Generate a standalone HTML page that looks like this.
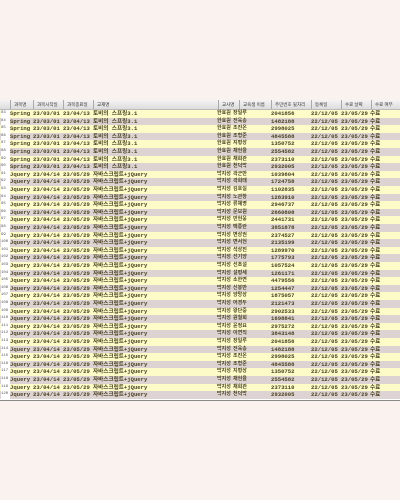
<!DOCTYPE html>
<html><head><meta charset="utf-8"><style>
body{margin:0;width:400px;height:500px;background:#faf2ee;position:relative;overflow:hidden;font-family:"Liberation Mono","Noto Sans CJK KR",monospace;}
#t{position:absolute;left:0;top:100px;width:400px;height:300px;background:#fff;border-bottom:1px solid #888;}
#h{position:absolute;left:0;top:0;width:400px;height:9px;background:linear-gradient(#f4f4f4,#dcdcdc);border-bottom:1px solid #bbb;}
#h span{position:absolute;top:0;height:9px;border-left:1px solid #aaa;font:4.5px "Liberation Sans","Noto Sans CJK KR",sans-serif;line-height:9px;color:#333;padding-left:3px;box-sizing:border-box}
.r{position:absolute;left:0;width:400px;height:7.6px;font-size:5.6px;line-height:7.6px;color:#4a4020;font-weight:bold;}
.y{background:#fdfcc8}.g{background:#ddd3d3}
.r span{position:absolute;white-space:nowrap}
.r .n{left:1px;font-size:4px;font-weight:normal;color:#555;background:#fff;width:9px;height:7.6px}
.a{left:10px}.b{left:33px}.c{left:63px}.d{left:93px}.e{left:217px;font-size:5px}.f{left:233px;font-size:5px}.h{left:271px}.i{left:311px}.j{left:341px}.k{left:370px}
</style></head><body><div id="t">
<div id="h"><span style="left:10px;width:23px">과목명</span><span style="left:33px;width:30px">과목시작일</span><span style="left:63px;width:30px">과목종료일</span><span style="left:93px;width:125px">교재명</span><span style="left:218px;width:21px">교사명</span><span style="left:239px;width:32px">교육생 이름</span><span style="left:271px;width:40px">주민번호 뒷자리</span><span style="left:311px;width:30px">등록일</span><span style="left:341px;width:30px">수료 날짜</span><span style="left:371px;width:29px">수료 여부</span></div>
<div class="r y" style="top:10px"><span class="n">83</span><span class="a">Spring</span><span class="b">23/03/01</span><span class="c">23/04/13</span><span class="d">토비의 스프링3.1</span><span class="e">한효원</span><span class="f">장일루</span><span class="h">2041856</span><span class="i">22/12/05</span><span class="j">23/05/29</span><span class="k">수료</span></div>
<div class="r g" style="top:17.6px"><span class="n">84</span><span class="a">Spring</span><span class="b">23/03/01</span><span class="c">23/04/13</span><span class="d">토비의 스프링3.1</span><span class="e">한효원</span><span class="f">전육송</span><span class="h">1482188</span><span class="i">22/12/05</span><span class="j">23/05/29</span><span class="k">수료</span></div>
<div class="r y" style="top:25.2px"><span class="n">85</span><span class="a">Spring</span><span class="b">23/03/01</span><span class="c">23/04/13</span><span class="d">토비의 스프링3.1</span><span class="e">한효원</span><span class="f">조진온</span><span class="h">2998025</span><span class="i">22/12/05</span><span class="j">23/05/29</span><span class="k">수료</span></div>
<div class="r g" style="top:32.8px"><span class="n">86</span><span class="a">Spring</span><span class="b">23/03/01</span><span class="c">23/04/13</span><span class="d">토비의 스프링3.1</span><span class="e">한효원</span><span class="f">조형준</span><span class="h">4845588</span><span class="i">22/12/05</span><span class="j">23/05/29</span><span class="k">수료</span></div>
<div class="r y" style="top:40.4px"><span class="n">87</span><span class="a">Spring</span><span class="b">23/03/01</span><span class="c">23/04/13</span><span class="d">토비의 스프링3.1</span><span class="e">한효원</span><span class="f">지평상</span><span class="h">1350752</span><span class="i">22/12/05</span><span class="j">23/05/29</span><span class="k">수료</span></div>
<div class="r g" style="top:48px"><span class="n">88</span><span class="a">Spring</span><span class="b">23/03/01</span><span class="c">23/04/13</span><span class="d">토비의 스프링3.1</span><span class="e">한효원</span><span class="f">채현율</span><span class="h">2554582</span><span class="i">22/12/05</span><span class="j">23/05/29</span><span class="k">수료</span></div>
<div class="r y" style="top:55.6px"><span class="n">89</span><span class="a">Spring</span><span class="b">23/03/01</span><span class="c">23/04/13</span><span class="d">토비의 스프링3.1</span><span class="e">한효원</span><span class="f">채희관</span><span class="h">2373110</span><span class="i">22/12/05</span><span class="j">23/05/29</span><span class="k">수료</span></div>
<div class="r g" style="top:63.2px"><span class="n">90</span><span class="a">Spring</span><span class="b">23/03/01</span><span class="c">23/04/13</span><span class="d">토비의 스프링3.1</span><span class="e">한효원</span><span class="f">천덕박</span><span class="h">2932005</span><span class="i">22/12/05</span><span class="j">23/05/29</span><span class="k">수료</span></div>
<div class="r y" style="top:70.8px"><span class="n">91</span><span class="a">Jquery</span><span class="b">23/04/14</span><span class="c">23/05/29</span><span class="d">자바스크립트+jQuery</span><span class="e">박지성</span><span class="f">곽군만</span><span class="h">1039804</span><span class="i">22/12/05</span><span class="j">23/05/29</span><span class="k">수료</span></div>
<div class="r g" style="top:78.4px"><span class="n">92</span><span class="a">Jquery</span><span class="b">23/04/14</span><span class="c">23/05/29</span><span class="d">자바스크립트+jQuery</span><span class="e">박지성</span><span class="f">곽희태</span><span class="h">1724758</span><span class="i">22/12/05</span><span class="j">23/05/29</span><span class="k">수료</span></div>
<div class="r y" style="top:86px"><span class="n">93</span><span class="a">Jquery</span><span class="b">23/04/14</span><span class="c">23/05/29</span><span class="d">자바스크립트+jQuery</span><span class="e">박지성</span><span class="f">김호실</span><span class="h">1102835</span><span class="i">22/12/05</span><span class="j">23/05/29</span><span class="k">수료</span></div>
<div class="r g" style="top:93.6px"><span class="n">94</span><span class="a">Jquery</span><span class="b">23/04/14</span><span class="c">23/05/29</span><span class="d">자바스크립트+jQuery</span><span class="e">박지성</span><span class="f">노관창</span><span class="h">1283910</span><span class="i">22/12/05</span><span class="j">23/05/29</span><span class="k">수료</span></div>
<div class="r y" style="top:101.2px"><span class="n">95</span><span class="a">Jquery</span><span class="b">23/04/14</span><span class="c">23/05/29</span><span class="d">자바스크립트+jQuery</span><span class="e">박지성</span><span class="f">류혜영</span><span class="h">2946737</span><span class="i">22/12/05</span><span class="j">23/05/29</span><span class="k">수료</span></div>
<div class="r g" style="top:108.8px"><span class="n">96</span><span class="a">Jquery</span><span class="b">23/04/14</span><span class="c">23/05/29</span><span class="d">자바스크립트+jQuery</span><span class="e">박지성</span><span class="f">문보원</span><span class="h">2660808</span><span class="i">22/12/05</span><span class="j">23/05/29</span><span class="k">수료</span></div>
<div class="r y" style="top:116.4px"><span class="n">97</span><span class="a">Jquery</span><span class="b">23/04/14</span><span class="c">23/05/29</span><span class="d">자바스크립트+jQuery</span><span class="e">박지성</span><span class="f">민현웅</span><span class="h">2441731</span><span class="i">22/12/05</span><span class="j">23/05/29</span><span class="k">수료</span></div>
<div class="r g" style="top:124px"><span class="n">98</span><span class="a">Jquery</span><span class="b">23/04/14</span><span class="c">23/05/29</span><span class="d">자바스크립트+jQuery</span><span class="e">박지성</span><span class="f">백종란</span><span class="h">3851878</span><span class="i">22/12/05</span><span class="j">23/05/29</span><span class="k">수료</span></div>
<div class="r y" style="top:131.6px"><span class="n">99</span><span class="a">Jquery</span><span class="b">23/04/14</span><span class="c">23/05/29</span><span class="d">자바스크립트+jQuery</span><span class="e">박지성</span><span class="f">변상권</span><span class="h">2374527</span><span class="i">22/12/05</span><span class="j">23/05/29</span><span class="k">수료</span></div>
<div class="r g" style="top:139.2px"><span class="n">100</span><span class="a">Jquery</span><span class="b">23/04/14</span><span class="c">23/05/29</span><span class="d">자바스크립트+jQuery</span><span class="e">박지성</span><span class="f">변서현</span><span class="h">2135199</span><span class="i">22/12/05</span><span class="j">23/05/29</span><span class="k">수료</span></div>
<div class="r y" style="top:146.8px"><span class="n">101</span><span class="a">Jquery</span><span class="b">23/04/14</span><span class="c">23/05/29</span><span class="d">자바스크립트+jQuery</span><span class="e">박지성</span><span class="f">석상진</span><span class="h">1289970</span><span class="i">22/12/05</span><span class="j">23/05/29</span><span class="k">수료</span></div>
<div class="r g" style="top:154.4px"><span class="n">102</span><span class="a">Jquery</span><span class="b">23/04/14</span><span class="c">23/05/29</span><span class="d">자바스크립트+jQuery</span><span class="e">박지성</span><span class="f">선기양</span><span class="h">1775793</span><span class="i">22/12/05</span><span class="j">23/05/29</span><span class="k">수료</span></div>
<div class="r y" style="top:162px"><span class="n">103</span><span class="a">Jquery</span><span class="b">23/04/14</span><span class="c">23/05/29</span><span class="d">자바스크립트+jQuery</span><span class="e">박지성</span><span class="f">선초설</span><span class="h">1057524</span><span class="i">22/12/05</span><span class="j">23/05/29</span><span class="k">수료</span></div>
<div class="r g" style="top:169.6px"><span class="n">104</span><span class="a">Jquery</span><span class="b">23/04/14</span><span class="c">23/05/29</span><span class="d">자바스크립트+jQuery</span><span class="e">박지성</span><span class="f">설평세</span><span class="h">1261171</span><span class="i">22/12/05</span><span class="j">23/05/29</span><span class="k">수료</span></div>
<div class="r y" style="top:177.2px"><span class="n">105</span><span class="a">Jquery</span><span class="b">23/04/14</span><span class="c">23/05/29</span><span class="d">자바스크립트+jQuery</span><span class="e">박지성</span><span class="f">소한연</span><span class="h">4479556</span><span class="i">22/12/05</span><span class="j">23/05/29</span><span class="k">수료</span></div>
<div class="r g" style="top:184.8px"><span class="n">106</span><span class="a">Jquery</span><span class="b">23/04/14</span><span class="c">23/05/29</span><span class="d">자바스크립트+jQuery</span><span class="e">박지성</span><span class="f">신봉반</span><span class="h">1254447</span><span class="i">22/12/05</span><span class="j">23/05/29</span><span class="k">수료</span></div>
<div class="r y" style="top:192.4px"><span class="n">107</span><span class="a">Jquery</span><span class="b">23/04/14</span><span class="c">23/05/29</span><span class="d">자바스크립트+jQuery</span><span class="e">박지성</span><span class="f">양망상</span><span class="h">1875057</span><span class="i">22/12/05</span><span class="j">23/05/29</span><span class="k">수료</span></div>
<div class="r g" style="top:200px"><span class="n">108</span><span class="a">Jquery</span><span class="b">23/04/14</span><span class="c">23/05/29</span><span class="d">자바스크립트+jQuery</span><span class="e">박지성</span><span class="f">어경두</span><span class="h">2121473</span><span class="i">22/12/05</span><span class="j">23/05/29</span><span class="k">수료</span></div>
<div class="r y" style="top:207.6px"><span class="n">109</span><span class="a">Jquery</span><span class="b">23/04/14</span><span class="c">23/05/29</span><span class="d">자바스크립트+jQuery</span><span class="e">박지성</span><span class="f">왕단중</span><span class="h">2902533</span><span class="i">22/12/05</span><span class="j">23/05/29</span><span class="k">수료</span></div>
<div class="r g" style="top:215.2px"><span class="n">110</span><span class="a">Jquery</span><span class="b">23/04/14</span><span class="c">23/05/29</span><span class="d">자바스크립트+jQuery</span><span class="e">박지성</span><span class="f">원철희</span><span class="h">1698841</span><span class="i">22/12/05</span><span class="j">23/05/29</span><span class="k">수료</span></div>
<div class="r y" style="top:222.8px"><span class="n">111</span><span class="a">Jquery</span><span class="b">23/04/14</span><span class="c">23/05/29</span><span class="d">자바스크립트+jQuery</span><span class="e">박지성</span><span class="f">윤정요</span><span class="h">2975272</span><span class="i">22/12/05</span><span class="j">23/05/29</span><span class="k">수료</span></div>
<div class="r g" style="top:230.4px"><span class="n">112</span><span class="a">Jquery</span><span class="b">23/04/14</span><span class="c">23/05/29</span><span class="d">자바스크립트+jQuery</span><span class="e">박지성</span><span class="f">이연직</span><span class="h">3843148</span><span class="i">22/12/05</span><span class="j">23/05/29</span><span class="k">수료</span></div>
<div class="r y" style="top:238px"><span class="n">113</span><span class="a">Jquery</span><span class="b">23/04/14</span><span class="c">23/05/29</span><span class="d">자바스크립트+jQuery</span><span class="e">박지성</span><span class="f">장일루</span><span class="h">2041856</span><span class="i">22/12/05</span><span class="j">23/05/29</span><span class="k">수료</span></div>
<div class="r g" style="top:245.6px"><span class="n">114</span><span class="a">Jquery</span><span class="b">23/04/14</span><span class="c">23/05/29</span><span class="d">자바스크립트+jQuery</span><span class="e">박지성</span><span class="f">전육송</span><span class="h">1482188</span><span class="i">22/12/05</span><span class="j">23/05/29</span><span class="k">수료</span></div>
<div class="r y" style="top:253.2px"><span class="n">115</span><span class="a">Jquery</span><span class="b">23/04/14</span><span class="c">23/05/29</span><span class="d">자바스크립트+jQuery</span><span class="e">박지성</span><span class="f">조진온</span><span class="h">2998025</span><span class="i">22/12/05</span><span class="j">23/05/29</span><span class="k">수료</span></div>
<div class="r g" style="top:260.8px"><span class="n">116</span><span class="a">Jquery</span><span class="b">23/04/14</span><span class="c">23/05/29</span><span class="d">자바스크립트+jQuery</span><span class="e">박지성</span><span class="f">조형준</span><span class="h">4845588</span><span class="i">22/12/05</span><span class="j">23/05/29</span><span class="k">수료</span></div>
<div class="r y" style="top:268.4px"><span class="n">117</span><span class="a">Jquery</span><span class="b">23/04/14</span><span class="c">23/05/29</span><span class="d">자바스크립트+jQuery</span><span class="e">박지성</span><span class="f">지평상</span><span class="h">1350752</span><span class="i">22/12/05</span><span class="j">23/05/29</span><span class="k">수료</span></div>
<div class="r g" style="top:276px"><span class="n">118</span><span class="a">Jquery</span><span class="b">23/04/14</span><span class="c">23/05/29</span><span class="d">자바스크립트+jQuery</span><span class="e">박지성</span><span class="f">채현율</span><span class="h">2554582</span><span class="i">22/12/05</span><span class="j">23/05/29</span><span class="k">수료</span></div>
<div class="r y" style="top:283.6px"><span class="n">119</span><span class="a">Jquery</span><span class="b">23/04/14</span><span class="c">23/05/29</span><span class="d">자바스크립트+jQuery</span><span class="e">박지성</span><span class="f">채희관</span><span class="h">2373110</span><span class="i">22/12/05</span><span class="j">23/05/29</span><span class="k">수료</span></div>
<div class="r g" style="top:291.2px"><span class="n">120</span><span class="a">Jquery</span><span class="b">23/04/14</span><span class="c">23/05/29</span><span class="d">자바스크립트+jQuery</span><span class="e">박지성</span><span class="f">천덕박</span><span class="h">2932005</span><span class="i">22/12/05</span><span class="j">23/05/29</span><span class="k">수료</span></div>
</div></body></html>
